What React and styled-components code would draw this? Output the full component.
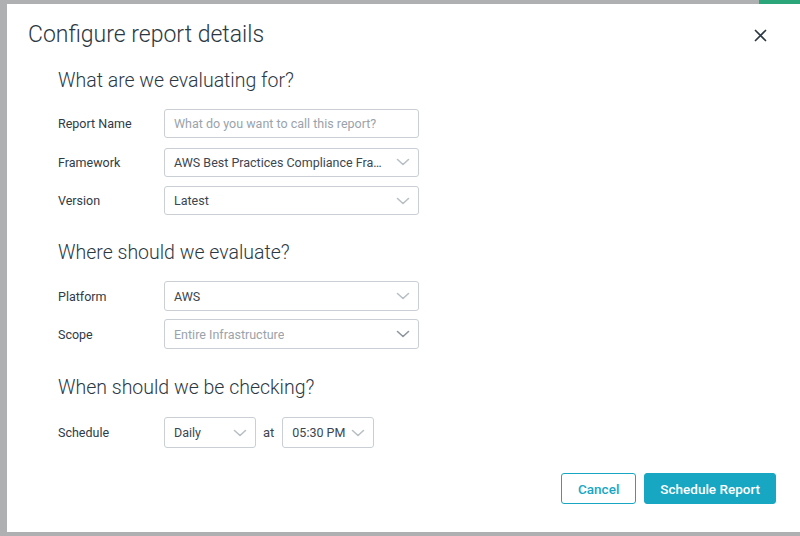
import React from 'react';
import styled, { createGlobalStyle } from 'styled-components';

const GlobalStyle = createGlobalStyle`
    * { box-sizing: border-box; }
    html, body {
        margin: 0;
        padding: 0;
        width: 800px;
        height: 536px;
        overflow: hidden;
        background: #a9abad;
        font-family: Roboto, "Liberation Sans", sans-serif;
    }
`;

const Backdrop = styled.div`
    position: relative;
    width: 800px;
    height: 536px;
    display: flex;
    padding: 4px 0 4px 7px;
    background: #aeb0b2;
`;

const TopAccent = styled.div`
    position: absolute;
    top: 0;
    right: 0;
    width: 41px;
    height: 4px;
    background: #2aa67a;
`;

const Modal = styled.div`
    flex: 1;
    background: #ffffff;
    display: flex;
    flex-direction: column;
    padding: 16px 24px 28px 21px;
`;

const Header = styled.div`
    display: flex;
    align-items: center;
    justify-content: space-between;
`;

const Title = styled.h1`
    margin: 0;
    font-size: 23px;
    line-height: 30px;
    font-weight: 300;
    color: #2b3843;
`;

const CloseButton = styled.button`
    border: 0;
    background: none;
    padding: 0;
    margin-right: 9px;
    width: 13px;
    height: 13px;
    display: flex;
    cursor: pointer;
`;

const Body = styled.div`
    padding-left: 30px;
    display: flex;
    flex-direction: column;
`;

const SectionTitle = styled.h2`
    margin: ${p => p.$top}px 0 ${p => p.$bottom}px;
    font-size: 19.5px;
    line-height: 26px;
    font-weight: 300;
    color: #2b3843;
`;

const Rows = styled.div`
    display: flex;
    flex-direction: column;
    gap: ${p => p.$gap || 9}px;
`;

const Row = styled.div`
    display: flex;
    align-items: center;
`;

const Label = styled.div`
    width: 106px;
    font-size: 12.5px;
    color: #2f3b46;
`;

const Field = styled.div`
    position: relative;
    width: ${p => p.$width}px;
    height: ${p => p.$height || 29}px;
    border: 1px solid #c9cfd4;
    border-radius: 3px;
    display: flex;
    align-items: center;
    padding: 0 ${p => p.$padRight}px 0 9px;
    font-size: 12.5px;
    color: ${p => (p.$muted ? '#9aa3ab' : '#3b4650')};
    white-space: nowrap;
    overflow: hidden;
`;

const FieldText = styled.span`
    overflow: hidden;
    text-overflow: ellipsis;
    white-space: nowrap;
`;

const Chevron = styled.svg`
    position: absolute;
    right: 8px;
    top: 50%;
    margin-top: -4px;
`;

const AtText = styled.span`
    margin: 0 8px 0 7px;
    font-size: 13px;
    color: #3b4650;
`;

const Footer = styled.div`
    margin-top: auto;
    display: flex;
    justify-content: flex-end;
    gap: 8px;
`;

const Button = styled.button`
    height: 31px;
    padding: 0 ${p => (p.$primary ? 15 : 16)}px;
    border-radius: 3px;
    font-family: Roboto, "Liberation Sans", sans-serif;
    font-size: 13.5px;
    font-weight: 500;
    cursor: pointer;
    border: 1px solid #17a7c3;
    background: ${p => (p.$primary ? '#17a7c3' : '#ffffff')};
    color: ${p => (p.$primary ? '#ffffff' : '#17a7c3')};
`;

function Select({ width, height, muted, children }) {
    return (
        <Field $width={width} $height={height} $muted={muted} $padRight={width < 120 ? 24 : 30}>
            <FieldText>{children}</FieldText>
            <Chevron width="14" height="8" viewBox="0 0 14 8" fill="none">
                <path d="M1.5 1.5L7 6.5L12.5 1.5" stroke={muted ? '#8d969e' : '#b8bfc5'} strokeWidth="1.6" strokeLinecap="round" strokeLinejoin="round" />
            </Chevron>
        </Field>
    );
}

export default function App() {
    return (
        <>
            <GlobalStyle />
            <Backdrop>
                <TopAccent />
                <Modal>
                    <Header>
                        <Title>Configure report details</Title>
                        <CloseButton aria-label="Close">
                            <svg width="13" height="13" viewBox="0 0 13 13">
                                <path d="M1.5 1.5L11.5 11.5M11.5 1.5L1.5 11.5" stroke="#2b3843" strokeWidth="1.7" strokeLinecap="round" />
                            </svg>
                        </CloseButton>
                    </Header>
                    <Body>
                        <SectionTitle $top={18} $bottom={15}>What are we evaluating for?</SectionTitle>
                        <Rows $gap={9.5}>
                            <Row>
                                <Label>Report Name</Label>
                                <Field $width={255} $muted $padRight={6}>
                                    <FieldText>What do you want to call this report?</FieldText>
                                </Field>
                            </Row>
                            <Row>
                                <Label>Framework</Label>
                                <Select width={255}>AWS Best Practices Compliance Framework</Select>
                            </Row>
                            <Row>
                                <Label>Version</Label>
                                <Select width={255}>Latest</Select>
                            </Row>
                        </Rows>

                        <SectionTitle $top={25} $bottom={15}>Where should we evaluate?</SectionTitle>
                        <Rows $gap={8}>
                            <Row>
                                <Label>Platform</Label>
                                <Select width={255} height={30}>AWS</Select>
                            </Row>
                            <Row>
                                <Label>Scope</Label>
                                <Select width={255} height={30} muted>Entire Infrastructure</Select>
                            </Row>
                        </Rows>

                        <SectionTitle $top={26} $bottom={16}>When should we be checking?</SectionTitle>
                        <Rows>
                            <Row>
                                <Label>Schedule</Label>
                                <Select width={92} height={31}>Daily</Select>
                                <AtText>at</AtText>
                                <Select width={92} height={31}>05:30 PM</Select>
                            </Row>
                        </Rows>
                    </Body>
                    <Footer>
                        <Button>Cancel</Button>
                        <Button $primary>Schedule Report</Button>
                    </Footer>
                </Modal>
            </Backdrop>
        </>
    );
}
